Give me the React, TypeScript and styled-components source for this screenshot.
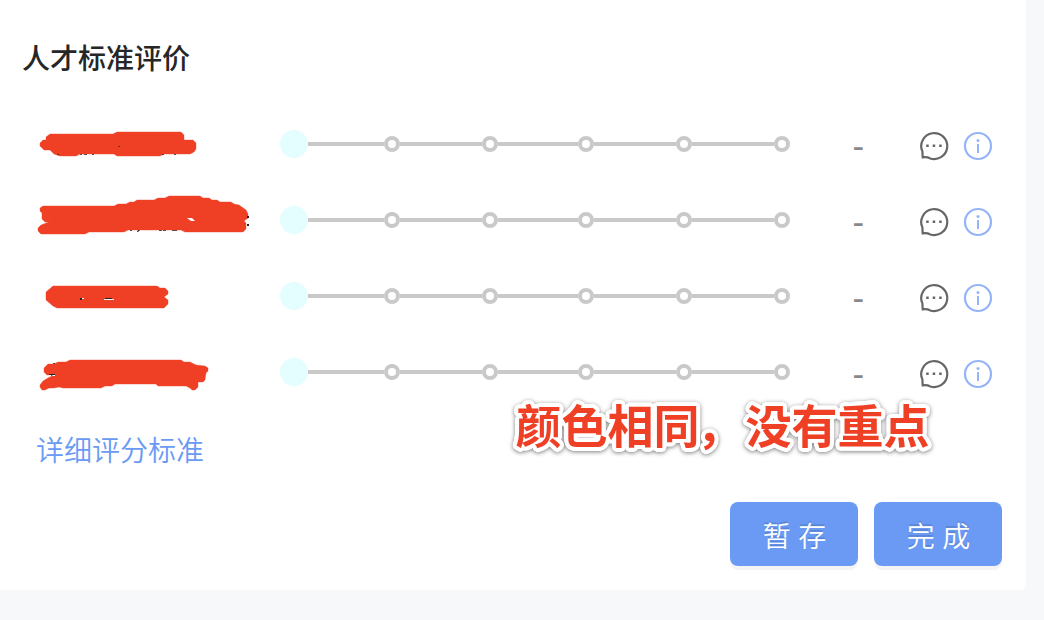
import React from 'react';
import styled, { createGlobalStyle } from 'styled-components';

const GlobalStyle = createGlobalStyle`
    *{
        box-sizing: border-box;
    }
    body {
        margin: 0;
        background: #f6f8fa;
        font-family: "Noto Sans CJK SC", sans-serif;
    }
`

const Page = styled.div`
    height: 620px;
    overflow: hidden;
    background: #f6f8fa;
`

const Card = styled.section`
    position: relative;
    width: 1026px;
    height: 590px;
    background: #fff;
    border-radius: 0 0 6px 0;
`

const Title = styled.h2`
    margin: 0;
    height: 106px;
    padding: 37px 0 0 22px;
    font-size: 28px;
    font-weight: 500;
    line-height: 40px;
    color: #262626;
`

const RowStyles = styled.div`
    display: flex;
    align-items: center;
    height: 76px;
`

const Label = styled.div`
    width: 280px;
    height: 76px;
    svg {
        display: block;
    }
`

const Slider = styled.div`
    display: flex;
    align-items: center;
    width: 510px;
`

const Handle = styled.span`
    width: 28px;
    height: 28px;
    border-radius: 50%;
    background: #e4fdff;
`

const Line = styled.span<{ $width: number }>`
    width: ${({ $width }) => $width}px;
    height: 4px;
    background: #c9c9c9;
`

const Dot = styled.span`
    width: 16px;
    height: 16px;
    border: 4px solid #c9c9c9;
    border-radius: 50%;
    background: #fff;
`

const Score = styled.span`
    width: 128px;
    padding-top: 4px;
    padding-left: 62.5px;
    font-family: "Liberation Sans", sans-serif;
    font-size: 35px;
    line-height: 40px;
    color: #888;
`

const Actions = styled.div`
    display: flex;
    column-gap: 12px;
    padding-top: 4px;
    svg {
        display: block;
    }
`

const DetailLink = styled.a`
    display: block;
    width: 168px;
    margin: 19px 0 0 36px;
    font-size: 28px;
    font-weight: 350;
    line-height: 40px;
    color: #6a9af4;
    cursor: pointer;
`

const Footer = styled.div`
    display: flex;
    justify-content: flex-end;
    column-gap: 16px;
    padding: 33px 24px 0 0;
`

const Button = styled.button`
    width: 128px;
    height: 64px;
    padding: 2px 0 0 1px;
    border: none;
    border-radius: 8px;
    background: #6a9af4;
    box-shadow: 0 4px 0 rgba(0, 0, 0, 0.043);
    color: #fff;
    font-family: inherit;
    font-size: 28px;
    font-weight: 350;
    word-spacing: 1.5px;
    text-shadow: 0 -2px 0 rgba(0, 0, 0, 0.12);
    cursor: pointer;
`

// round white outline, built from shadows so that the corners stay soft
const outline = Array.from({ length: 24 }, (_, i) => {
    const angle = (i / 24) * Math.PI * 2;
    return `${(Math.cos(angle) * 4).toFixed(2)}px ${(Math.sin(angle) * 4).toFixed(2)}px 0 #fff`;
}).join(', ');

const Note = styled.div`
    position: absolute;
    top: 389px;
    left: 515.5px;
    font-size: 46px;
    font-weight: 700;
    line-height: 68px;
    white-space: nowrap;
    color: #ef4026;
    text-shadow: ${outline};
    filter: drop-shadow(0 1px 2px rgba(0, 0, 0, 0.5));
`

const Comma = styled.span`
    position: relative;
    left: -3px;
`

// widths of the track between two neighbouring stops
const segments = [76, 82, 80, 82, 82];

type Mark = { top: number, cover: string, specks: string, gap?: string };

// marker strokes hiding the names, with the bits of text that stick out
const marks: Mark[] = [
    {
        top: 106,
        cover: 'M46 137L50 134H113L117 132H181L184 135V140H193L196 143V149L194 152L190 154H164L160 156H117L114 154H80L76 156H60L54 154L50 150H44L40 146V143L43 140H46Z',
        specks: 'M57 154h2v.7h-2zM80 154h2v.7h-2zM84 154h3v.7h-3zM92 154h2v.7h-2zM118.5 146h1.2v1h-1.2zM162 154h2v.7h-2zM174 154h2v.7h-2z',
    },
    {
        top: 182,
        cover: 'M40 208L43 206H114L118 204H126L130 202H134L137 200H154L158 198H165L169 196H200L203 198H209L212 200H217L220 202H231L234 204L239 205L246 210L248 214V218L244 221L246 223V229L243 232H185L181 230H128L124 232H89L85 234H41L38 231V228L41 225L49 222H45L42 219V213L40 211Z',
        gap: 'M187 218h5l3 3h-4z',
        specks: 'M130 230h2v.7h-2zM138 230h2l-2 2h-1zM159 230h3v.7h-3zM163 230h3v.7h-3zM172 230h5v.7h-5zM247 216h2v2h-2zM247 224h2v2h-2z',
    },
    {
        top: 258,
        cover: 'M53 286H157L160 288H165L168 291V294L164 297L168 300V304L164 308H57L53 306L46 300V292Z',
        gap: 'M81 298h3v1h-3zM104 299h10v1h-10z',
        specks: 'M80 298h2v2h-2zM105 298h7v1h-7z',
    },
    {
        top: 334,
        cover: 'M70 360H181L184 362H190L196 365L205 366L208 368V371L206 373L205 380L203 382H198V387L195 390H192L190 388L186 386H158L156 384H115L112 386H105L101 388H63L59 387L54 388H49L45 390H42L40 387V385L43 381L48 378L54 375H47L44 372V368L48 364H54L58 362H66Z',
        gap: 'M49 374h6v2h-6z',
        specks: 'M49 374h6v1h-6zM52 374h1l-1 2h-1zM53 363h2v.7h-2z',
    },
];

function CommentIcon() {
    return (
        <svg width="32" height="32" viewBox="0 0 32 32" fill="none">
            <path d="M4.4 21.4A13 13 0 1 1 11.6 28.2Q9.8 26.9 4.7 27.3L4.4 21.4Z" stroke="#666" strokeWidth="2.2" />
            <path d="M8.2 14.6h2.5v2.5H8.2zM14.7 14.6h2.5v2.5h-2.5zM21.2 14.6h2.5v2.5h-2.5z" fill="#666" />
        </svg>
    )
}

function InfoIcon() {
    return (
        <svg width="32" height="32" viewBox="0 0 32 32" fill="none">
            <circle cx="16" cy="16" r="13" stroke="#94b4fa" strokeWidth="2.2" />
            <path d="M16 14V23" stroke="#94b4fa" strokeWidth="2" />
            <circle cx="16" cy="10.4" r="1.5" fill="#94b4fa" />
        </svg>
    )
}

function RatingRow({ mark }: { mark: Mark }) {
    return (
        <RowStyles>
            <Label>
                <svg width="280" height="76" viewBox={`0 ${mark.top} 280 76`}>
                    <path d={mark.cover} fill="#ef4026" stroke="#ef4026" strokeWidth="0.4" strokeLinejoin="round" />
                    {mark.gap && <path d={mark.gap} fill="#fff" />}
                    <path d={mark.specks} fill="#222" />
                </svg>
            </Label>
            <Slider>
                <Handle />
                {segments.map((width, i) => (
                    <React.Fragment key={i}>
                        <Line $width={width} />
                        <Dot />
                    </React.Fragment>
                ))}
            </Slider>
            <Score>-</Score>
            <Actions>
                <CommentIcon />
                <InfoIcon />
            </Actions>
        </RowStyles>
    )
}

function App() {
    return (
        <Page>
            <GlobalStyle />
            <Card>
                <Title>人才标准评价</Title>
                {marks.map(mark => <RatingRow key={mark.top} mark={mark} />)}
                <DetailLink>详细评分标准</DetailLink>
                <Footer>
                    <Button type='button'>暂 存</Button>
                    <Button type='button'>完 成</Button>
                </Footer>
                <Note>颜色相同<Comma>，</Comma>没有重点</Note>
            </Card>
        </Page>
    )
}

export default App;
